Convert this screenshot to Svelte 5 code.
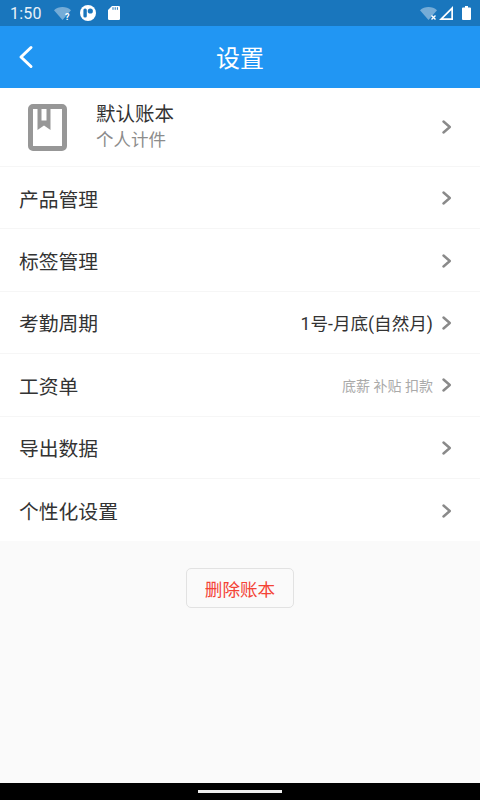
<script>
	const rows = [
		{ label: '产品管理' },
		{ label: '标签管理' },
		{ label: '考勤周期', value: '1号-月底(自然月)' },
		{ label: '工资单', hint: '底薪 补贴 扣款' },
		{ label: '导出数据' },
		{ label: '个性化设置' }
	];
</script>

<div class="page">
	<div class="statusbar">
		<span class="time">1:50</span>
		<div class="status-left">
			<svg width="17" height="13" viewBox="0 0 17 13">
				<path d="M0 3.200C4.500-1 12.500-1 17 3.200L8.500 13Z" fill="#fff" opacity="0.4" />
				<text x="11" y="12.500" class="tiny">?</text>
			</svg>
			<svg width="16" height="16" viewBox="0 0 16 16">
				<circle cx="8" cy="8" r="8" fill="#fff" />
				<rect x="3.400" y="3.400" width="3.400" height="9.200" rx="1.600" fill="#1976bd" />
				<circle cx="10.300" cy="6" r="2.600" fill="#1976bd" />
			</svg>
			<svg class="sd" width="12" height="14" viewBox="0 0 12 14">
				<path d="M4 0h6.800A1.200 1.200 0 0 1 12 1.200V12.800A1.200 1.200 0 0 1 10.800 14H1.200A1.200 1.200 0 0 1 0 12.800V4Z" fill="#fff" />
				<path d="M5 1.200v2.600M7.200 1.200v2.600M9.400 1.200v2.600" stroke="#1976bd" stroke-width="1" />
			</svg>
		</div>
		<div class="status-right">
			<svg width="17" height="13" viewBox="0 0 17 13">
				<path d="M0 3.200C4.500-1 12.500-1 17 3.200L8.500 13Z" fill="#fff" opacity="0.4" />
				<path d="M11.500 8.500l4 4M15.500 8.500l-4 4" stroke="#fff" stroke-width="1.400" />
			</svg>
			<svg width="14" height="14" viewBox="0 0 14 14">
				<path d="M14 0V14H0ZM12.300 4.200 4.200 12.300H12.300Z" fill="#fff" />
			</svg>
			<svg class="battery" width="9" height="14" viewBox="0 0 9 14">
				<path d="M3 0H6V1.400H8a1 1 0 0 1 1 1V13a1 1 0 0 1-1 1H1a1 1 0 0 1-1-1V2.400a1 1 0 0 1 1-1H3Z" fill="#fff" />
			</svg>
		</div>
	</div>

	<header class="topbar">
		<button class="back" aria-label="返回">
			<svg width="16" height="24" viewBox="0 0 16 24">
				<path d="M13 2.500 3 12l10 9.500" fill="none" stroke="#fff" stroke-width="3" stroke-linecap="round" stroke-linejoin="round" />
			</svg>
		</button>
		<h1>设置</h1>
	</header>

	<main class="content">
		<ul class="list">
			<li class="row book-row">
				<svg class="book" width="39" height="47" viewBox="0 0 39 47">
					<rect x="2.500" y="2.500" width="34" height="42" rx="2.500" fill="#fff" stroke="#979797" stroke-width="5" />
					<path d="M9.500 3V26l6.500-4.500L22.500 26V3H18.500V16.500H13.500V3Z" fill="#979797" />
				</svg>
				<div class="book-text">
					<span class="book-name">默认账本</span>
					<span class="book-sub">个人计件</span>
				</div>
				{@render chevron()}
			</li>
			{#each rows as row}
				<li class="row">
					<span class="label">{row.label}</span>
					{#if row.value}
						<span class="value">{row.value}</span>
					{/if}
					{#if row.hint}
						<span class="hint">{row.hint}</span>
					{/if}
					{@render chevron()}
				</li>
			{/each}
		</ul>

		<button class="delete">删除账本</button>
	</main>

	<div class="navbar"><span class="pill"></span></div>
</div>

{#snippet chevron()}
	<svg class="chevron" width="10" height="14" viewBox="0 0 10 14">
		<path d="M1.500 1.500 7.800 7l-6.300 5.500" fill="none" stroke="#8a8a8a" stroke-width="2.400" stroke-linecap="round" stroke-linejoin="round" />
	</svg>
{/snippet}

<style>
	:global(body) {
		margin: 0;
	}

	.page {
		width: 480px;
		height: 800px;
		display: flex;
		flex-direction: column;
		overflow: hidden;
		background: #fafafa;
		font-family: Roboto, "Noto Sans CJK SC", sans-serif;
	}

	.statusbar {
		height: 26px;
		flex-shrink: 0;
		box-sizing: border-box;
		padding: 0 9px 0 10px;
		display: flex;
		align-items: center;
		background: #1976bd;
		color: #e8f1f8;
	}

	.time {
		font-size: 16px;
		letter-spacing: 0.2px;
		width: 44px;
	}

	.status-left {
		display: flex;
		align-items: center;
		gap: 9px;
	}

	.sd {
		margin-left: 3px;
	}

	.status-right {
		margin-left: auto;
		display: flex;
		align-items: center;
		gap: 2px;
	}

	.battery {
		margin-left: 7px;
	}

	.tiny {
		font-size: 9px;
		font-weight: 700;
		fill: #fff;
	}

	.topbar {
		height: 62px;
		flex-shrink: 0;
		position: relative;
		display: flex;
		align-items: center;
		justify-content: center;
		background: #2196f3;
	}

	.topbar h1 {
		margin: 0 0 2px;
		font-size: 24px;
		font-weight: 400;
		color: #fff;
	}

	.back {
		position: absolute;
		left: 18px;
		top: 19px;
		padding: 0;
		border: 0;
		background: none;
		display: flex;
	}

	.content {
		flex: 1;
		display: flex;
		flex-direction: column;
		align-items: center;
	}

	.list {
		width: 100%;
		margin: 0;
		padding: 0;
		list-style: none;
		background: #fff;
	}

	.row {
		height: 62.400px;
		box-sizing: border-box;
		padding: 1px 28px 0 19px;
		display: flex;
		align-items: center;
		border-bottom: 1px solid #f6f6f6;
	}

	.row:last-child {
		border-bottom: 0;
	}

	.book-row {
		height: 79px;
		padding-left: 28px;
		padding-top: 0;
	}

	.book {
		flex-shrink: 0;
	}

	.book-text {
		margin-left: 29px;
		display: flex;
		flex-direction: column;
		margin-bottom: 1px;
	}

	.book-name {
		font-size: 19.500px;
		line-height: 26px;
		color: #333;
	}

	.book-sub {
		font-size: 17.500px;
		line-height: 24px;
		color: #8c8c8c;
	}

	.label {
		font-size: 19.800px;
		color: #333;
	}

	.value {
		margin-left: auto;
		font-size: 17.600px;
		color: #333;
	}

	.hint {
		margin-left: auto;
		font-size: 14px;
		color: #aaa;
	}

	.chevron {
		margin-left: auto;
		flex-shrink: 0;
	}

	.value + .chevron,
	.hint + .chevron {
		margin-left: 9px;
	}

	.delete {
		width: 108px;
		height: 40px;
		margin-top: 27px;
		padding: 0;
		box-sizing: border-box;
		border: 1.500px solid #e2e2e2;
		border-radius: 5px;
		background: #fafafa;
		color: #f44336;
		font-family: inherit;
		font-size: 17.600px;
	}

	.navbar {
		height: 17px;
		flex-shrink: 0;
		display: flex;
		justify-content: center;
		align-items: center;
		background: #000;
	}

	.pill {
		width: 84px;
		height: 3px;
		background: #eee;
	}
</style>
